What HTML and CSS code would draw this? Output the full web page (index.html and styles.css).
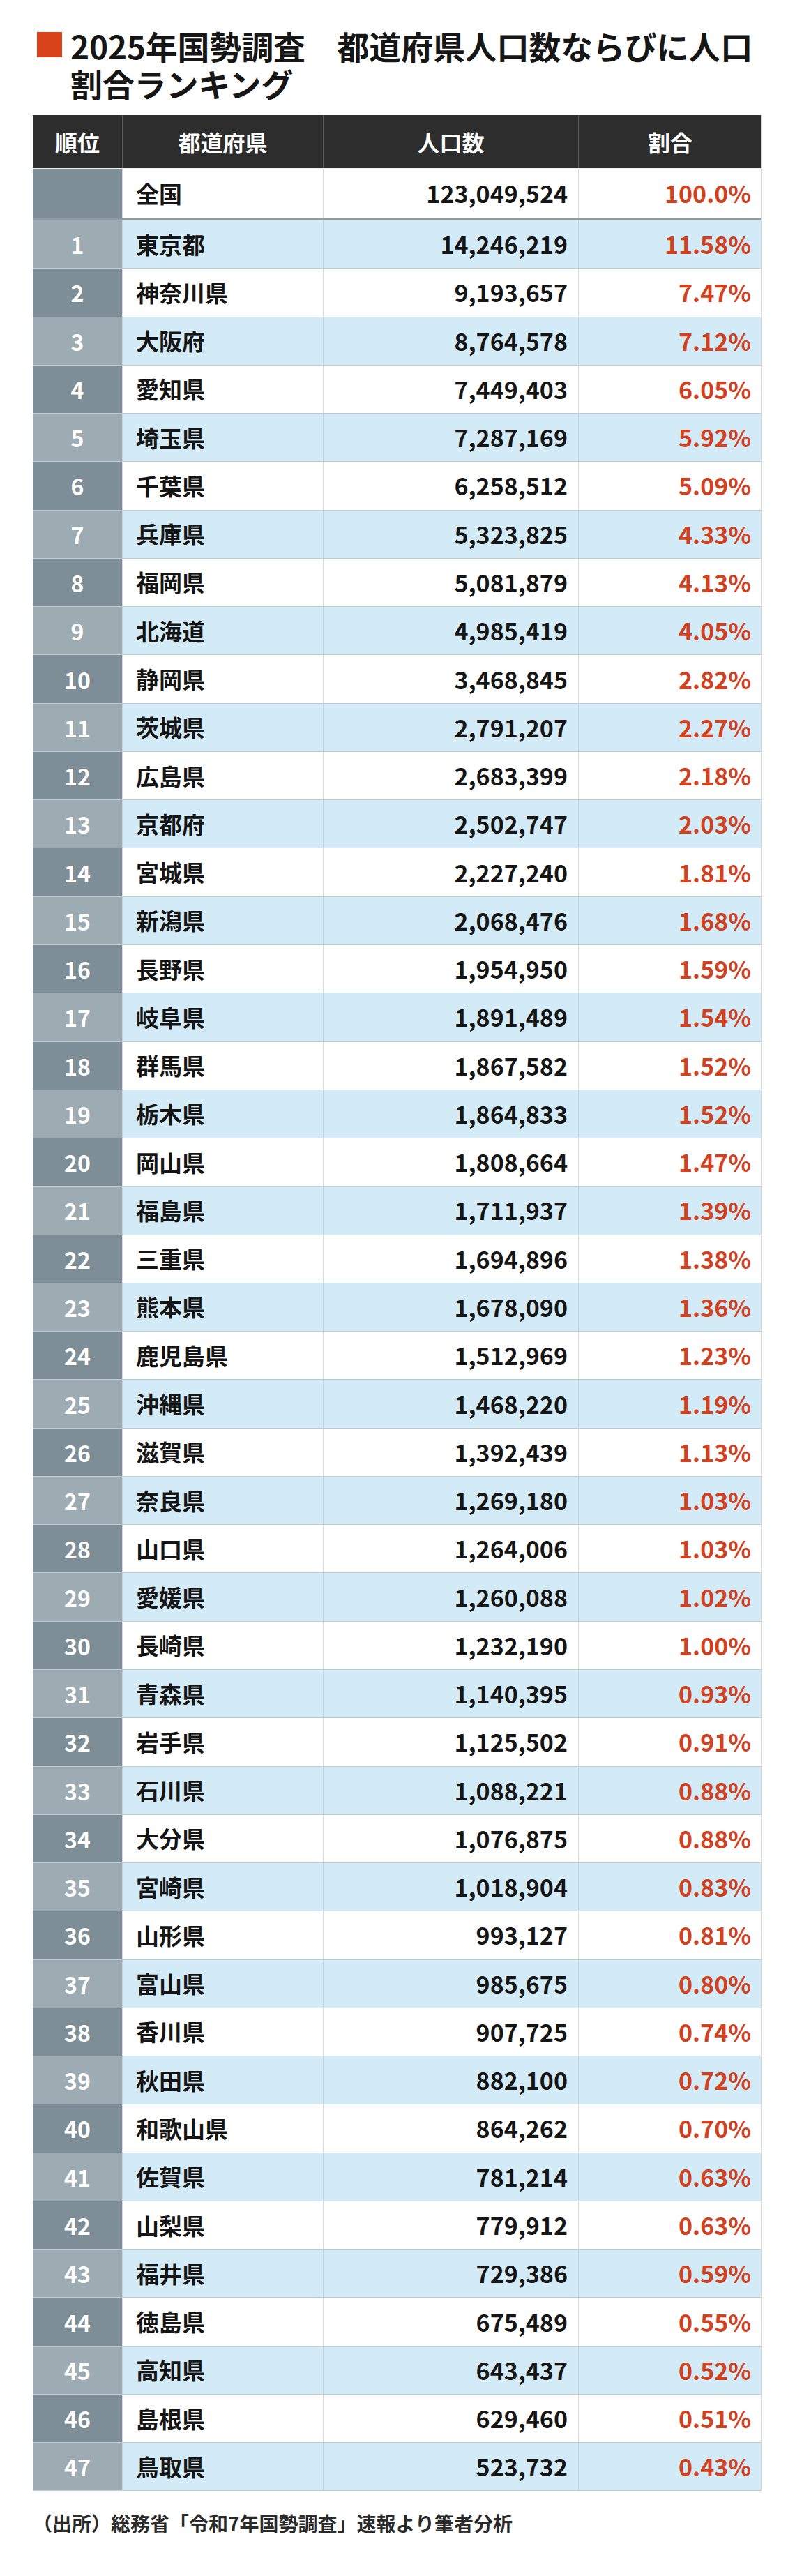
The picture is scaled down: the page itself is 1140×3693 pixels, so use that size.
FILE: index.html
```html
<!DOCTYPE html>
<html lang="ja">
<head>
<meta charset="utf-8">
<title>2025年国勢調査 都道府県人口数ならびに人口割合ランキング</title>
<link rel="stylesheet" href="styles.css">
</head>
<body>
<div class="page">
  <header class="title">
    <span class="mark"></span>
    <h1>2025年国勢調査　都道府県人口数ならびに人口<br>割合ランキング</h1>
  </header>

  <div class="table">
    <div class="row head">
      <div class="c rank">順位</div>
      <div class="c name">都道府県</div>
      <div class="c pop">人口数</div>
      <div class="c pct">割合</div>
    </div>
    <div class="row total">
      <div class="c rank"></div>
      <div class="c name">全国</div>
      <div class="c pop">123,049,524</div>
      <div class="c pct">100.0%</div>
    </div>
    <div class="row odd"><div class="c rank">1</div><div class="c name">東京都</div><div class="c pop">14,246,219</div><div class="c pct">11.58%</div></div>
    <div class="row even"><div class="c rank">2</div><div class="c name">神奈川県</div><div class="c pop">9,193,657</div><div class="c pct">7.47%</div></div>
    <div class="row odd"><div class="c rank">3</div><div class="c name">大阪府</div><div class="c pop">8,764,578</div><div class="c pct">7.12%</div></div>
    <div class="row even"><div class="c rank">4</div><div class="c name">愛知県</div><div class="c pop">7,449,403</div><div class="c pct">6.05%</div></div>
    <div class="row odd"><div class="c rank">5</div><div class="c name">埼玉県</div><div class="c pop">7,287,169</div><div class="c pct">5.92%</div></div>
    <div class="row even"><div class="c rank">6</div><div class="c name">千葉県</div><div class="c pop">6,258,512</div><div class="c pct">5.09%</div></div>
    <div class="row odd"><div class="c rank">7</div><div class="c name">兵庫県</div><div class="c pop">5,323,825</div><div class="c pct">4.33%</div></div>
    <div class="row even"><div class="c rank">8</div><div class="c name">福岡県</div><div class="c pop">5,081,879</div><div class="c pct">4.13%</div></div>
    <div class="row odd"><div class="c rank">9</div><div class="c name">北海道</div><div class="c pop">4,985,419</div><div class="c pct">4.05%</div></div>
    <div class="row even"><div class="c rank">10</div><div class="c name">静岡県</div><div class="c pop">3,468,845</div><div class="c pct">2.82%</div></div>
    <div class="row odd"><div class="c rank">11</div><div class="c name">茨城県</div><div class="c pop">2,791,207</div><div class="c pct">2.27%</div></div>
    <div class="row even"><div class="c rank">12</div><div class="c name">広島県</div><div class="c pop">2,683,399</div><div class="c pct">2.18%</div></div>
    <div class="row odd"><div class="c rank">13</div><div class="c name">京都府</div><div class="c pop">2,502,747</div><div class="c pct">2.03%</div></div>
    <div class="row even"><div class="c rank">14</div><div class="c name">宮城県</div><div class="c pop">2,227,240</div><div class="c pct">1.81%</div></div>
    <div class="row odd"><div class="c rank">15</div><div class="c name">新潟県</div><div class="c pop">2,068,476</div><div class="c pct">1.68%</div></div>
    <div class="row even"><div class="c rank">16</div><div class="c name">長野県</div><div class="c pop">1,954,950</div><div class="c pct">1.59%</div></div>
    <div class="row odd"><div class="c rank">17</div><div class="c name">岐阜県</div><div class="c pop">1,891,489</div><div class="c pct">1.54%</div></div>
    <div class="row even"><div class="c rank">18</div><div class="c name">群馬県</div><div class="c pop">1,867,582</div><div class="c pct">1.52%</div></div>
    <div class="row odd"><div class="c rank">19</div><div class="c name">栃木県</div><div class="c pop">1,864,833</div><div class="c pct">1.52%</div></div>
    <div class="row even"><div class="c rank">20</div><div class="c name">岡山県</div><div class="c pop">1,808,664</div><div class="c pct">1.47%</div></div>
    <div class="row odd"><div class="c rank">21</div><div class="c name">福島県</div><div class="c pop">1,711,937</div><div class="c pct">1.39%</div></div>
    <div class="row even"><div class="c rank">22</div><div class="c name">三重県</div><div class="c pop">1,694,896</div><div class="c pct">1.38%</div></div>
    <div class="row odd"><div class="c rank">23</div><div class="c name">熊本県</div><div class="c pop">1,678,090</div><div class="c pct">1.36%</div></div>
    <div class="row even"><div class="c rank">24</div><div class="c name">鹿児島県</div><div class="c pop">1,512,969</div><div class="c pct">1.23%</div></div>
    <div class="row odd"><div class="c rank">25</div><div class="c name">沖縄県</div><div class="c pop">1,468,220</div><div class="c pct">1.19%</div></div>
    <div class="row even"><div class="c rank">26</div><div class="c name">滋賀県</div><div class="c pop">1,392,439</div><div class="c pct">1.13%</div></div>
    <div class="row odd"><div class="c rank">27</div><div class="c name">奈良県</div><div class="c pop">1,269,180</div><div class="c pct">1.03%</div></div>
    <div class="row even"><div class="c rank">28</div><div class="c name">山口県</div><div class="c pop">1,264,006</div><div class="c pct">1.03%</div></div>
    <div class="row odd"><div class="c rank">29</div><div class="c name">愛媛県</div><div class="c pop">1,260,088</div><div class="c pct">1.02%</div></div>
    <div class="row even"><div class="c rank">30</div><div class="c name">長崎県</div><div class="c pop">1,232,190</div><div class="c pct">1.00%</div></div>
    <div class="row odd"><div class="c rank">31</div><div class="c name">青森県</div><div class="c pop">1,140,395</div><div class="c pct">0.93%</div></div>
    <div class="row even"><div class="c rank">32</div><div class="c name">岩手県</div><div class="c pop">1,125,502</div><div class="c pct">0.91%</div></div>
    <div class="row odd"><div class="c rank">33</div><div class="c name">石川県</div><div class="c pop">1,088,221</div><div class="c pct">0.88%</div></div>
    <div class="row even"><div class="c rank">34</div><div class="c name">大分県</div><div class="c pop">1,076,875</div><div class="c pct">0.88%</div></div>
    <div class="row odd"><div class="c rank">35</div><div class="c name">宮崎県</div><div class="c pop">1,018,904</div><div class="c pct">0.83%</div></div>
    <div class="row even"><div class="c rank">36</div><div class="c name">山形県</div><div class="c pop">993,127</div><div class="c pct">0.81%</div></div>
    <div class="row odd"><div class="c rank">37</div><div class="c name">富山県</div><div class="c pop">985,675</div><div class="c pct">0.80%</div></div>
    <div class="row even"><div class="c rank">38</div><div class="c name">香川県</div><div class="c pop">907,725</div><div class="c pct">0.74%</div></div>
    <div class="row odd"><div class="c rank">39</div><div class="c name">秋田県</div><div class="c pop">882,100</div><div class="c pct">0.72%</div></div>
    <div class="row even"><div class="c rank">40</div><div class="c name">和歌山県</div><div class="c pop">864,262</div><div class="c pct">0.70%</div></div>
    <div class="row odd"><div class="c rank">41</div><div class="c name">佐賀県</div><div class="c pop">781,214</div><div class="c pct">0.63%</div></div>
    <div class="row even"><div class="c rank">42</div><div class="c name">山梨県</div><div class="c pop">779,912</div><div class="c pct">0.63%</div></div>
    <div class="row odd"><div class="c rank">43</div><div class="c name">福井県</div><div class="c pop">729,386</div><div class="c pct">0.59%</div></div>
    <div class="row even"><div class="c rank">44</div><div class="c name">徳島県</div><div class="c pop">675,489</div><div class="c pct">0.55%</div></div>
    <div class="row odd"><div class="c rank">45</div><div class="c name">高知県</div><div class="c pop">643,437</div><div class="c pct">0.52%</div></div>
    <div class="row even"><div class="c rank">46</div><div class="c name">島根県</div><div class="c pop">629,460</div><div class="c pct">0.51%</div></div>
    <div class="row odd"><div class="c rank">47</div><div class="c name">鳥取県</div><div class="c pop">523,732</div><div class="c pct">0.43%</div></div>
  </div>

  <p class="source">（出所）総務省「令和7年国勢調査」速報より筆者分析</p>
</div>
</body>
</html>
```

FILE: styles.css
```css
* { box-sizing: border-box; }

html, body {
  margin: 0;
  padding: 0;
  background: #ffffff;
}

body {
  font-family: "Noto Sans CJK JP", "Noto Sans", sans-serif;
  color: #151515;
}

.page {
  width: 1140px;
  padding: 38px 0 0 0;
}

.title {
  display: flex;
  align-items: flex-start;
  padding-left: 53px;
}

.mark {
  flex: none;
  width: 36px;
  height: 36px;
  margin-top: 8px;
  background: #d8431c;
}

.title h1 {
  margin: 0 0 0 12px;
  font-size: 46px;
  line-height: 54px;
  font-weight: 700;
  color: #161616;
  letter-spacing: -0.2px;
}

.table {
  margin: 19px 0 0 47px;
  width: 1045px;
  border-right: 1px solid #d3d8db;
}

.row {
  display: grid;
  grid-template-columns: 128px 288px 366px 263px;
  align-items: stretch;
}

.c {
  display: flex;
  align-items: center;
  font-weight: 700;
  font-size: 33px;
  line-height: 1;
}

.c + .c {
  border-left: 1px solid #d6dadd;
}

.rank {
  justify-content: center;
  color: #ffffff;
  font-size: 32px;
}

.name {
  padding-left: 19px;
}

.pop {
  justify-content: flex-end;
  padding-right: 15px;
  font-size: 34px;
}

.pct {
  justify-content: flex-end;
  padding-right: 15px;
  font-size: 34px;
  color: #d2401e;
}

.head {
  height: 77px;
  background: #2d2d2d;
  border-bottom: 1px solid #f2f2f2;
}

.head .c {
  justify-content: center;
  color: #ffffff;
  font-size: 32px;
  padding: 0;
}

.head .c + .c {
  border-left: 1px solid #5a5a5a;
}

.total {
  height: 74px;
  border-bottom: 4px solid #8d9ba3;
  background: #ffffff;
}

.total .rank {
  background: #7d8e97;
}

.odd,
.even {
  height: 69.28px;
  border-bottom: 1px solid #bdcbd3;
}

.odd {
  background: #d3eaf7;
}

.odd .rank {
  background: #9dabb3;
}

.odd .c + .c {
  border-left-color: #c3d3dc;
}

.even {
  background: #ffffff;
}

.even .rank {
  background: #7d8e97;
}

.source {
  margin: 26px 0 0 47px;
  font-size: 28px;
  line-height: 40px;
  font-weight: 700;
  color: #2a2a2a;
}
```
